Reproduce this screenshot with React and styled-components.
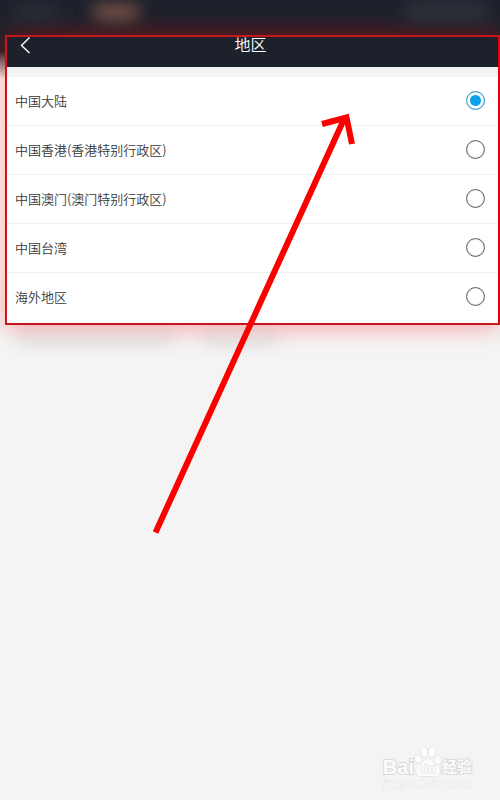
import React, { useState } from "react";
import styled, { createGlobalStyle } from "styled-components";

const GlobalStyle = createGlobalStyle`
    * {
        box-sizing: border-box;
    }

    body {
        margin: 0;
        background: #f4f4f4;
        color: #383838;
        font-family: "Noto Sans CJK SC", sans-serif;
    }
`;

const Page = styled.div`
    position: relative;
    display: flex;
    flex-direction: column;
    min-height: 100vh;
    overflow: hidden;
`;

const StatusBar = styled.div`
    display: flex;
    justify-content: space-between;
    align-items: flex-start;
    height: 35px;
    padding: 4px 12px;
    background: #1d212b;
`;

const StatusGroup = styled.div`
    display: flex;
    gap: 32px;
`;

const Smudge = styled.div`
    width: ${(props) => props.$width}px;
    height: 16px;
    border-radius: 8px;
    background: ${(props) => props.$color};
    filter: blur(8px);
`;

const Backdrop = styled.div`
    padding-left: 5px;
    background: linear-gradient(#1d212b 16px, #fff 44px, #fff 240px, #f4f4f4);
`;

const Panel = styled.main`
    padding-bottom: 1px;
    border: 2px solid #c8161d;
    border-right-color: #e60008;
    background: #fff;
    box-shadow: 0 0 24px rgba(255, 0, 0, 0.4);
`;

const Header = styled.header`
    display: grid;
    grid-template-columns: 40px 1fr 44px;
    height: 30px;
    background: #1d212b;
    color: #fff;
`;

const BackButton = styled.button`
    display: flex;
    padding: 0 0 0 12px;
    border: 0;
    background: none;
    color: inherit;
`;

const Title = styled.h1`
    margin: 0;
    font-size: 16px;
    font-weight: 350;
    line-height: 14px;
    text-align: center;
`;

const List = styled.div`
    border-top: 10px solid #f4f4f4;
`;

const Row = styled.label`
    display: flex;
    align-items: center;
    justify-content: space-between;
    height: 49px;
    padding: 0 13px 1px 8px;
    border-bottom: 1px solid #f0f0f0;
    font-size: 13px;
    font-weight: 350;

    &:last-child {
        border-bottom-color: transparent;
    }
`;

const Radio = styled.input`
    appearance: none;
    width: 19px;
    height: 19px;
    margin: 0;
    border: 1px solid #666;
    border-radius: 50%;
    box-shadow: inset 0 0 1px #777;

    &:checked {
        border-color: #2f94c8;
        background: radial-gradient(#0ca2ea 5px, transparent 6px);
        box-shadow: inset 0 0 1px #2f94c8;
    }
`;

const FadedText = styled.div`
    display: flex;
    gap: 24px;
    padding: 6px 16px;
`;

const Arrow = styled.svg`
    position: absolute;
    top: 112px;
    left: 150px;
    pointer-events: none;
`;

const Watermark = styled.footer`
    display: flex;
    flex-direction: column;
    align-items: flex-end;
    margin-top: auto;
    padding: 0 28px 10px 0;
    color: #fcfcfc;
    font-family: "Liberation Sans", "Noto Sans CJK SC", sans-serif;
`;

const Brand = styled.div`
    display: flex;
    align-items: flex-end;
    font-size: 20px;
    font-weight: 700;
    line-height: 22px;
    paint-order: stroke;
    -webkit-text-stroke: 2px #dadada;
`;

const BrandSuffix = styled.span`
    font-size: 15px;
`;

const Site = styled.div`
    font-size: 11px;
    line-height: 12px;
    paint-order: stroke;
    -webkit-text-stroke: 1px #e6e6e6;
`;

const regions = [
    "中国大陆",
    "中国香港(香港特别行政区)",
    "中国澳门(澳门特别行政区)",
    "中国台湾",
    "海外地区",
];

const Paw = () => (
    <svg width="28" height="32" viewBox="0 0 28 32" fill="#fcfcfc" stroke="#d8d8d8" aria-hidden="true">
        <ellipse cx="4" cy="13" rx="3" ry="4" transform="rotate(-12 4 13)" />
        <ellipse cx="10" cy="6" rx="3.5" ry="5" />
        <ellipse cx="18" cy="6" rx="3.5" ry="5" transform="rotate(10 18 6)" />
        <ellipse cx="24" cy="14" rx="3.2" ry="4" transform="rotate(18 24 14)" />
        <path d="M14 12.500c-3 0-4 2.500-6 4.500s-6 4-6 8.500c0 3.500 3 5 6 5 2 0 4-.5 6-.5s4 .5 6 .5c3 0 6-1.500 6-5 0-4.500-4-6.500-6-8.500s-3-4.500-6-4.500z" />
        <text x="14" y="27" textAnchor="middle" fontSize="13" fontWeight="700">du</text>
    </svg>
);

const App = () => {
    const [selected, setSelected] = useState(regions[0]);

    return (
        <Page>
            <GlobalStyle />
            <StatusBar>
                <StatusGroup>
                    <Smudge $width={48} $color="#2a2f38" />
                    <Smudge $width={48} $color="#7d5349" />
                </StatusGroup>
                <Smudge $width={84} $color="#30353e" />
            </StatusBar>
            <Backdrop>
                <Panel>
                    <Header>
                        <BackButton aria-label="返回">
                            <svg width="12" height="18" viewBox="0 0 12 18" fill="none" stroke="currentColor" strokeWidth="1.4">
                                <path d="M10.500 0.500L2.500 8.500L10.500 16" />
                            </svg>
                        </BackButton>
                        <Title>地区</Title>
                    </Header>
                    <List role="radiogroup" aria-label="地区">
                        {regions.map((region) => (
                            <Row key={region}>
                                {region}
                                <Radio
                                    type="radio"
                                    name="region"
                                    checked={selected === region}
                                    onChange={() => setSelected(region)}
                                />
                            </Row>
                        ))}
                    </List>
                </Panel>
            </Backdrop>
            <FadedText>
                <Smudge $width={160} $color="rgba(0, 0, 0, 0.06)" />
                <Smudge $width={80} $color="rgba(0, 0, 0, 0.06)" />
            </FadedText>
            <Arrow width="210" height="426" viewBox="0 0 210 426" fill="none" stroke="#fa0000" strokeWidth="6" aria-hidden="true">
                <path d="M5.500 420.500L195 5" />
                <path d="M172 12L196.500 5.500L202 32" />
            </Arrow>
            <Watermark>
                <Brand>
                    Bai
                    <Paw />
                    <BrandSuffix>经验</BrandSuffix>
                </Brand>
                <Site>jingyan.baidu.com</Site>
            </Watermark>
        </Page>
    );
};

export default App;
